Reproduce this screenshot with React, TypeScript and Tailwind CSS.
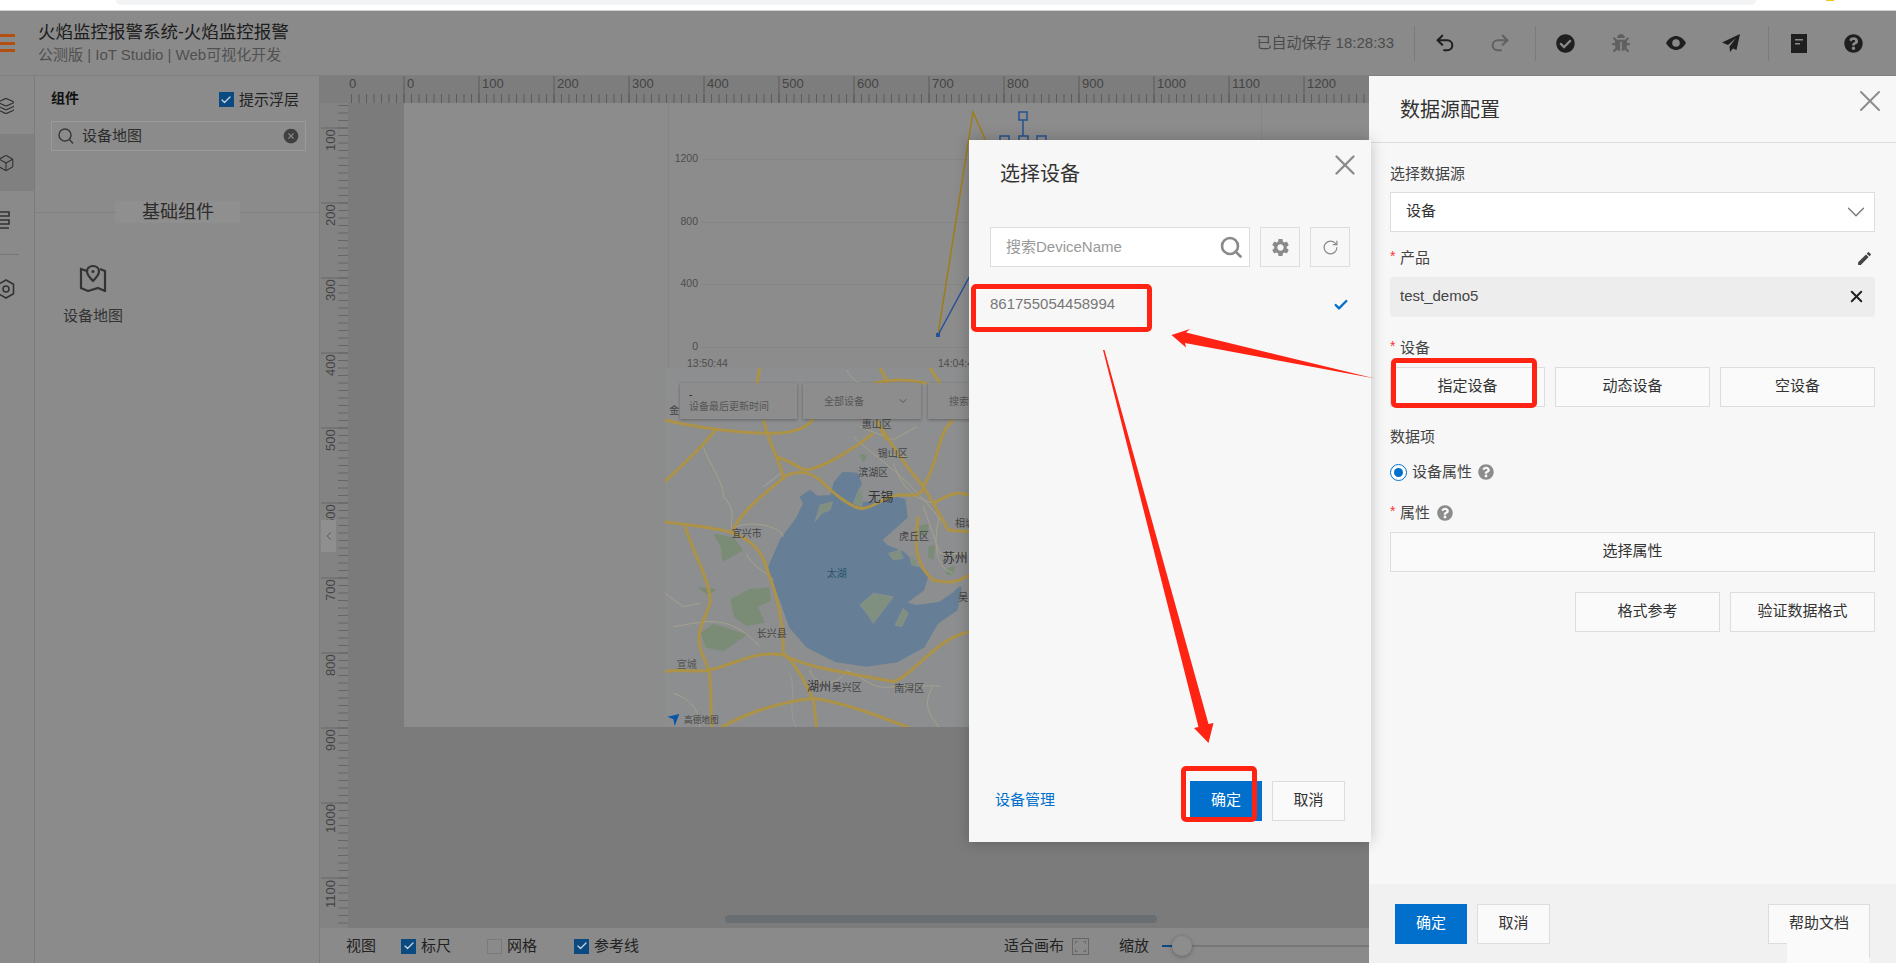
import { Box, Check, ChevronDown, ChevronLeft, Layers, Redo2, RotateCw, Undo2, X } from "lucide-react";
import { FaBug, FaCheckCircle, FaQuestionCircle } from "react-icons/fa";
import { MdEdit, MdSettings } from "react-icons/md";
import { IoCloseCircle } from "react-icons/io5";

const TOP_MAJORS = [0, 100, 200, 300, 400, 500, 600, 700, 800, 900, 1000, 1100, 1200];
const LEFT_MAJORS = [100, 200, 300, 400, 500, 600, 700, 800, 900, 1000, 1100];

function TopRuler() {
  const ticks = Array.from({ length: 136 }, (_, i) => 31 + i * 7.5);
  return (
    <svg width="1049" height="27" className="block">
      {ticks.map((x) => (
        <line key={x} x1={x + 0.5} x2={x + 0.5} y1="18" y2="27" stroke="#5c5c5c" />
      ))}
      <text x="29" y="12" fontSize="13" fill="#444">0</text>
      {TOP_MAJORS.map((n) => {
        const x = 84 + n * 0.75;
        return (
          <g key={n}>
            <line x1={x} x2={x} y1="0" y2="27" stroke="#5c5c5c" />
            <text x={x + 3} y="12" fontSize="13" fill="#444">{n}</text>
          </g>
        );
      })}
    </svg>
  );
}

function LeftRuler() {
  const ticks = Array.from({ length: 110 }, (_, i) => 2 + i * 7.5);
  return (
    <svg width="28" height="825" className="block">
      {ticks.map((y) => (
        <line key={y} x1="18" x2="28" y1={y + 0.5} y2={y + 0.5} stroke="#666" />
      ))}
      {LEFT_MAJORS.map((n, i) => {
        const y = 25 + i * 75;
        return (
          <g key={n}>
            <line x1="1" x2="28" y1={y} y2={y} stroke="#666" />
            <text transform={`translate(15 ${y + (n >= 1000 ? 30 : 23)}) rotate(-90)`} fontSize="13" fill="#444">{n}</text>
          </g>
        );
      })}
    </svg>
  );
}

function Chart() {
  return (
    <svg viewBox="404 103 965 624" width="965" height="624" className="absolute left-0 top-0">
      <line x1="668.5" x2="668.5" y1="103" y2="368" stroke="#858585" />
      <line x1="1261.5" x2="1261.5" y1="103" y2="140" stroke="#858585" />
      {[159, 222, 284, 347].map((y) => (
        <line key={y} x1="702" x2="970" y1={y + 0.5} y2={y + 0.5} stroke="#858585" />
      ))}
      <g fontSize="10.5" fill="#4d4d4d" textAnchor="end">
        <text x="698" y="162">1200</text>
        <text x="698" y="225">800</text>
        <text x="698" y="287">400</text>
        <text x="698" y="350">0</text>
      </g>
      <g fontSize="10.5" fill="#4d4d4d">
        <text x="687" y="367">13:50:44</text>
        <text x="938" y="367">14:04:44</text>
      </g>
      <polyline points="938,335 973,112 990,150" fill="none" stroke="#a07d14" strokeWidth="1.5" />
      <polyline points="938,335 972,272" fill="none" stroke="#27509a" strokeWidth="1.5" />
      <rect x="936" y="333" width="4" height="4" fill="#27509a" />
      <g fill="none" stroke="#24528f" strokeWidth="1.5">
        <rect x="1019" y="112" width="8" height="8" />
        <line x1="1023" x2="1023" y1="120" y2="136" />
        <rect x="1000" y="136" width="9" height="9" />
        <rect x="1019" y="136" width="9" height="9" />
        <rect x="1037" y="136" width="9" height="9" />
      </g>
    </svg>
  );
}

function MapPanel() {
  const mapLabels: [string, number, number, number, string][] = [
    ["金", 103, 222, 30, "#444"],
    ["惠山区", 710, 263, 30, "#444"],
    ["锡山区", 758, 350, 30, "#444"],
    ["滨湖区", 700, 408, 30, "#444"],
    ["无锡", 722, 482, 38, "#333"],
    ["宜兴市", 320, 590, 30, "#444"],
    ["虎丘区", 822, 600, 30, "#444"],
    ["相城", 975, 562, 30, "#444"],
    ["苏州", 945, 665, 38, "#333"],
    ["太湖", 590, 712, 30, "#2a5570"],
    ["吴", 970, 782, 30, "#444"],
    ["长兴县", 395, 890, 30, "#444"],
    ["湖州", 537, 1054, 36, "#333"],
    ["吴兴区", 620, 1052, 30, "#444"],
    ["南浔区", 808, 1057, 30, "#444"],
    ["宣城", 140, 985, 30, "#555"],
  ];
  return (
    <div className="absolute left-[261px] top-[265px] h-[359px] w-[340px] overflow-hidden bg-[#8d8e8f]">
      <svg viewBox="75 84 1020 1077" width="340" height="359" className="block">
        {/* green areas */}
        <g fill="#7a8c76" stroke="#7a8c76" strokeWidth="6" strokeLinejoin="round">
          <path d="M225,585 L280,595 L305,630 L250,660 L245,620 Z" />
          <path d="M275,780 L330,750 L385,745 L390,780 L350,800 L370,845 L320,855 L285,830 Z" />
          <path d="M185,880 L220,855 L315,885 L250,930 L200,920 Z" />
          <path d="M180,745 L225,750 L205,762 Z" />
          <path d="M840,560 L862,555 L858,585 L840,582 Z" />
          <path d="M868,622 L882,618 L878,655 L868,650 Z" />
          <path d="M922,688 L942,680 L938,702 L922,702 Z" />
          <path d="M662,345 L678,348 L670,362 Z" />
        </g>
        <path
          fill="#667f96"
          stroke="#667f96"
          strokeWidth="10"
          strokeLinejoin="round"
          d="M390,680 L425,600 L470,540 L495,490 L485,472 L510,455 L530,472 L575,470 L585,430 L610,400 L650,403 L660,430 L650,490 L700,490 L760,472 L792,482 L798,530 L760,565 L720,600 L740,620 L790,640 L830,680 L860,708 L848,748 L790,790 L830,800 L900,790 L940,762 L960,745 L948,808 L890,848 L850,918 L770,962 L680,975 L590,962 L502,918 L452,860 L424,780 L398,720 Z"
        />
        <g fill="#7f9080" stroke="#8f918f" strokeWidth="2">
          <path d="M660,795 L700,760 L760,770 L730,810 L700,850 L680,820 Z" />
          <path d="M765,855 L790,805 L805,820 L785,860 Z" />
          <path d="M525,545 L540,495 L578,485 L570,510 L545,520 Z" />
          <path d="M640,490 L660,440 L670,470 L665,500 Z" />
          <path d="M745,640 L780,630 L790,655 L760,660 Z" />
          <path d="M810,650 L830,660 L835,680 L815,675 Z" />
        </g>
        {/* thin roads */}
        <g fill="none" stroke="#a5a28c" strokeWidth="3">
          <path d="M190,320 C210,380 250,420 250,470 C300,520 260,560 280,570" />
          <path d="M290,560 C340,540 420,560 430,590" />
          <path d="M620,90 C640,130 690,150 700,130" />
          <path d="M640,290 C700,350 800,400 925,570" />
          <path d="M760,370 C780,420 800,470 880,490" />
          <path d="M510,990 C520,1040 600,1040 620,990 C680,1020 700,1050 760,1040 C800,1050 860,1030 900,1040" />
          <path d="M100,860 C180,850 260,810 360,920" />
          <path d="M320,640 C330,680 390,700 400,720" />
          <path d="M900,520 C880,600 880,680 940,700" />
          <path d="M660,260 L760,300 L830,260 M720,340 L800,350 M850,500 L900,640 L985,640" />
          <path d="M75,760 L130,800 L180,790 M100,1060 C160,1080 180,1120 180,1164" />
          <path d="M880,1040 C850,1080 860,1120 900,1164" />
          <path d="M450,1000 C470,1060 440,1120 470,1164" stroke="#9a9a9a" />
          <path d="M370,440 C400,420 420,400 430,395" stroke="#9a9a9a" strokeWidth="5" />
        </g>
        {/* main roads */}
        <g fill="none" stroke="#ad9347" strokeWidth="9">
          <path d="M75,240 C150,260 300,280 400,280 C470,280 510,255 520,235" />
          <path d="M372,240 C380,300 430,380 430,420" />
          <path d="M75,425 C120,380 190,320 230,265" />
          <path d="M275,580 C300,510 390,450 440,405 C480,390 510,395 540,420 C580,460 640,510 670,505 C710,500 740,460 800,465 C840,470 850,450 850,440" />
          <path d="M410,350 C470,370 480,390 500,390 C560,380 650,320 700,280" />
          <path d="M75,545 C130,555 220,560 275,578 C340,600 370,640 385,700 C410,760 430,830 430,940 C470,970 500,1040 520,1080 L530,1164" />
          <path d="M135,560 C160,640 215,730 210,790 C190,850 160,880 190,950 C220,1000 210,1080 215,1164" />
          <path d="M75,995 C120,985 160,1000 210,990 C290,970 350,930 430,945 C520,990 640,1000 760,1025 C830,1000 880,900 987,875" />
          <path d="M240,1164 C320,1120 400,1090 520,1075 C620,1090 720,1130 810,1164" />
          <path d="M850,440 C790,370 750,310 710,240 L740,300" />
          <path d="M850,440 C900,360 890,280 940,240" />
          <path d="M850,440 L880,490 L925,570 L987,575" />
          <path d="M880,490 C920,470 940,450 987,465" />
          <path d="M835,530 C820,620 830,680 880,720 C920,730 950,730 987,705" />
          <path d="M360,84 L350,130 M720,84 L745,130 M870,84 L900,130 M700,130 C760,115 820,120 860,130" />
        </g>
        <g textAnchor="middle">
          {mapLabels.map(([label, x, y, size, fill]) => (
            <text key={label} x={x} y={y} fontSize={size} fill={fill}>{label}</text>
          ))}
        </g>
        <path d="M82,1130 L118,1122 L104,1158 L100,1138 Z" fill="#0b56a6" />
        <text x="132" y="1150" fontSize="26" fill="#444">高德地图</text>
      </svg>
      <div className="absolute left-[15px] top-[15px] flex h-[36px] w-[117px] flex-col justify-center bg-[#8d8d8d] pl-[9px] text-[10px] leading-[12px] text-[#555] shadow-[0_1px_3px_rgba(0,0,0,0.3)]">
        <span className="text-[#222]">-</span>
        <span>设备最后更新时间</span>
      </div>
      <div className="absolute left-[138px] top-[15px] flex h-[36px] w-[118px] items-center justify-between bg-[#8d8d8d] pl-[21px] pr-[12px] text-[10px] text-[#555] shadow-[0_1px_3px_rgba(0,0,0,0.3)]">
        <span>全部设备</span>
        <ChevronDown size={12} />
      </div>
      <div className="absolute left-[263px] top-[15px] flex h-[36px] w-[70px] items-center bg-[#8d8d8d] pl-[21px] text-[10px] text-[#555] shadow-[0_1px_3px_rgba(0,0,0,0.3)]">
        搜索设备
      </div>
    </div>
  );
}

function DimCheck({ checked, label }: { checked: boolean; label: string }) {
  return (
    <div className="flex items-center gap-[5px]">
      {checked ? (
        <span className="flex h-[15px] w-[15px] items-center justify-center bg-[#0b4a80] text-[#c9d6e0]">
          <Check size={12} strokeWidth={2.5} />
        </span>
      ) : (
        <span className="h-[15px] w-[15px] border border-[#7a7a7a]" />
      )}
      <span className="text-[15px] leading-5 text-[#222]">{label}</span>
    </div>
  );
}

function OutlineButton({ label, className }: { label: string; className: string }) {
  return (
    <div className={`flex h-10 items-center justify-center border border-[#dddddd] bg-[#fafafa] pb-px text-[15px] text-[#333] ${className}`}>
      {label}
    </div>
  );
}

function RequiredLabel({ label }: { label: string }) {
  return (
    <span className="flex items-center">
      <span className="w-[10px] -translate-y-[2px] text-[14px] leading-5 text-[#f33]">*</span>
      {label}
    </span>
  );
}

function ConfigPanel() {
  return (
    <aside className="flex w-[527px] flex-col bg-[#f7f7f7]">
      <div className="relative flex h-[67px] shrink-0 items-center border-b border-[#dedede] pl-[31px] pt-[2px] text-[20px] text-[#333]">
        数据源配置
        <X size={36} strokeWidth={1.3} className="absolute right-[8px] top-[7px] text-[#8c8c8c]" />
      </div>
      <div className="flex-1 px-[21px] pt-[21px]">
        <div className="text-[15px] leading-5 text-[#444]">选择数据源</div>
        <div className="mt-2 flex h-10 items-center justify-between border border-[#dddddd] bg-white pb-px pl-[15px] pr-[3px] text-[15px] text-[#333]">
          设备
          <ChevronDown size={30} strokeWidth={1.1} className="text-[#777]" />
        </div>
        <div className="mt-4 flex items-center justify-between text-[15px] leading-5 text-[#444]">
          <RequiredLabel label="产品" />
          <MdEdit size={17} className="mr-[2px] text-[#444]" />
        </div>
        <div className="mt-[9px] flex h-10 items-center justify-between rounded-sm bg-[#ededed] pb-px pl-[10px] pr-[9px] text-[15px] text-[#444]">
          test_demo5
          <X size={19} strokeWidth={2.5} className="text-[#222]" />
        </div>
        <div className="mt-[21px] text-[15px] leading-5 text-[#444]">
          <RequiredLabel label="设备" />
        </div>
        <div className="mt-[9px] flex gap-[10px]">
          <OutlineButton label="指定设备" className="w-[155px]" />
          <OutlineButton label="动态设备" className="w-[155px]" />
          <OutlineButton label="空设备" className="w-[155px]" />
        </div>
        <div className="mt-5 text-[15px] leading-5 text-[#444]">数据项</div>
        <div className="mt-[15px] flex items-center text-[15px] leading-5 text-[#444]">
          <span className="mr-[5px] flex h-[17px] w-[17px] items-center justify-center rounded-full border border-[#0070cc] bg-white">
            <span className="h-[9px] w-[9px] rounded-full bg-[#0070cc]" />
          </span>
          设备属性
          <FaQuestionCircle size={16} className="ml-[6px] text-[#8c8c8c]" />
        </div>
        <div className="mt-[21px] flex items-center text-[15px] leading-5 text-[#444]">
          <RequiredLabel label="属性" />
          <FaQuestionCircle size={16} className="ml-[7px] text-[#8c8c8c]" />
        </div>
        <OutlineButton label="选择属性" className="mt-[9px] w-full" />
        <div className="mt-5 flex justify-end gap-[10px]">
          <OutlineButton label="格式参考" className="w-[145px]" />
          <OutlineButton label="验证数据格式" className="w-[145px]" />
        </div>
      </div>
      <div className="flex h-[79px] shrink-0 justify-between bg-[#f1f1f1] px-[26px] pt-5">
        <div className="flex gap-[10px]">
          <div className="flex h-10 w-[72px] items-center justify-center bg-[#0070cc] pb-px text-[15px] text-white">确定</div>
          <OutlineButton label="取消" className="w-[73px]" />
        </div>
        <OutlineButton label="帮助文档" className="w-[102px]" />
      </div>
    </aside>
  );
}

function DeviceModal() {
  return (
    <div className="absolute left-[969px] top-[140px] flex h-[702px] w-[402px] flex-col bg-[#f7f7f7] px-[21px] shadow-[0_0_14px_rgba(0,0,0,0.22)]">
      <div className="relative h-[87px] shrink-0 pl-[10px] pt-[21px] text-[20px] leading-[26px] text-[#333]">
        选择设备
        <X size={34} strokeWidth={1.7} className="absolute right-[-12px] top-[8px] text-[#8c8c8c]" />
      </div>
      <div className="flex gap-[10px]">
        <div className="flex h-10 w-[260px] items-center justify-between border border-[#dddddd] bg-white pl-[15px] pr-[7px] text-[15px] text-[#999]">
          搜索DeviceName
          <svg width="22" height="22" viewBox="0 0 22 22" fill="none" stroke="#8a8a8a" strokeWidth="2.6">
            <circle cx="10" cy="10" r="8" />
            <path d="M15.500 15.500 20.500 20.500" strokeLinecap="round" />
          </svg>
        </div>
        <div className="flex h-10 w-10 items-center justify-center border border-[#dddddd] text-[#8a8a8a]">
          <MdSettings size={21} />
        </div>
        <div className="flex h-10 w-10 items-center justify-center border border-[#dddddd] text-[#8a8a8a]">
          <RotateCw size={17} strokeWidth={1.7} />
        </div>
      </div>
      <div className="mt-[27px] flex flex-1 items-start justify-between pr-[1px] text-[15px] leading-5 text-[#777]">
        861755054458994
        <Check size={16} strokeWidth={3.5} className="mt-[3px] text-[#0070cc]" />
      </div>
      <div className="flex h-[61px] shrink-0 items-start justify-between pl-[5px]">
        <span className="mt-[9px] text-[15px] leading-5 text-[#0070cc]">设备管理</span>
        <div className="mr-[5px] flex gap-[10px]">
          <div className="flex h-10 w-[72px] items-center justify-center bg-[#0070cc] pb-px text-[15px] text-white">确定</div>
          <OutlineButton label="取消" className="w-[73px]" />
        </div>
      </div>
    </div>
  );
}

export default function App() {
  return (
    <div className="relative flex h-[963px] w-[1896px] flex-col overflow-hidden bg-white font-['Liberation_Sans','Noto_Sans_CJK_SC',sans-serif]">
      {/* browser strip */}
      <div className="relative h-[11px] shrink-0 border-b border-[#cfcfcf] bg-white">
        <div className="ml-[116px] h-[5px] w-[1640px] rounded-b-lg bg-[#f1f3f4]" />
        <div className="absolute left-[1826px] top-0 h-[1px] w-[8px] bg-[#f5c518]" />
      </div>

      {/* header */}
      <header className="flex h-[65px] shrink-0 items-center justify-between border-b border-[#808080] bg-[#8a8a8a]">
        <div className="flex items-center">
          <div className="flex h-[18px] w-[15px] flex-col justify-between">
            <span className="h-[3px] bg-[#b4500f]" />
            <span className="h-[3px] bg-[#b4500f]" />
            <span className="h-[3px] bg-[#b4500f]" />
          </div>
          <div className="ml-[23px]">
            <div className="-mt-[2px] text-[17.5px] leading-[26px] text-[#1c1c1c]">火焰监控报警系统-火焰监控报警</div>
            <div className="text-[15px] leading-5 text-[#505050]">公测版 | IoT Studio | Web可视化开发</div>
          </div>
        </div>
        <div className="flex items-center">
          <span className="mr-[20px] text-[15px] text-[#4a4a4a]">已自动保存 18:28:33</span>
          <div className="flex h-[35px] items-center border-l border-[#7a7a7a] pl-[2px] pr-[8px]">
            <div className="flex w-[55px] justify-center text-[#1f1f1f]"><Undo2 size={22} strokeWidth={2.2} /></div>
            <div className="flex w-[55px] justify-center text-[#606060]"><Redo2 size={22} strokeWidth={2.2} /></div>
          </div>
          <div className="flex h-[35px] items-center border-l border-[#7a7a7a] pl-[2px] pr-[10px]">
            <div className="flex w-[55px] justify-center text-[#1f1f1f]"><FaCheckCircle size={19} /></div>
            <div className="flex w-[55px] justify-center text-[#606060]"><FaBug size={18} /></div>
            <div className="flex w-[55px] justify-center">
              <svg width="20" height="16" viewBox="0 0 20 16">
                <path fill="#1f1f1f" d="M0 8C3 3 6.500 1 10 1s7 2 10 7c-3 5-6.500 7-10 7S3 13 0 8z" />
                <circle cx="10" cy="8" r="3.800" fill="#8a8a8a" />
              </svg>
            </div>
            <div className="flex w-[55px] justify-center">
              <svg width="18" height="18" viewBox="0 0 18 18">
                <path fill="#1f1f1f" d="M18 0 0 8.500l6 2.500 8-7-6.500 8.500.5 5.500 3-3.500 3.500 1.500z" />
              </svg>
            </div>
          </div>
          <div className="flex h-[35px] items-center border-l border-[#7a7a7a] pl-[2px] pr-[15px]">
            <div className="flex w-[55px] justify-center">
              <svg width="16" height="19" viewBox="0 0 16 19">
                <path fill="#1f1f1f" d="M0 0h16v19H0z" />
                <path fill="#8a8a8a" d="M4 5h8v1.600H4zM4 9h5v1.600H4z" />
              </svg>
            </div>
            <div className="flex w-[55px] justify-center text-[#1f1f1f]"><FaQuestionCircle size={19} /></div>
          </div>
        </div>
      </header>

      <div className="flex min-h-0 flex-1">
        {/* icon rail */}
        <nav className="flex w-[35px] shrink-0 flex-col border-r border-[#7b7b7b] bg-[#8a8a8a] pt-px text-[#333]">
          <div className="flex h-[57px] items-center"><Layers size={18} strokeWidth={1.5} className="-ml-[3px]" /></div>
          <div className="flex h-[57px] items-center bg-[#808080]"><Box size={18} strokeWidth={1.5} className="-ml-[3px]" /></div>
          <div className="flex h-[57px] items-center">
            <svg width="18" height="20" viewBox="0 0 18 20" fill="none" stroke="currentColor" strokeWidth="1.6" className="-ml-[4px]">
              <path d="M1 2h12v4H1zM1 6v4h12v4H1v4h12" />
            </svg>
          </div>
          <div className="mt-[6px] h-px w-[19px] bg-[#777]" />
          <div className="mt-[5px] flex h-[57px] items-center">
            <svg width="18" height="20" viewBox="0 0 18 20" fill="none" stroke="currentColor" strokeWidth="1.6" className="-ml-[3px]">
              <path d="M9 1l7.500 4.300v9.400L9 19l-7.500-4.300V5.300z" />
              <circle cx="9" cy="10" r="3" />
            </svg>
          </div>
        </nav>

        {/* component panel */}
        <section className="flex w-[285px] shrink-0 flex-col border-r border-[#7b7b7b] bg-[#8b8b8b] px-[16px]">
          <div className="mt-[12px] flex h-5 items-center justify-between pr-[4px]">
            <span className="text-[14px] font-bold text-[#111]">组件</span>
            <div className="mt-[3px]"><DimCheck checked label="提示浮层" /></div>
          </div>
          <div className="mt-[13px] flex h-[30px] w-[255px] items-center border border-[#9a9a9a] px-[5px] text-[15px] text-[#2c2c2c]">
            <svg width="18" height="18" viewBox="0 0 18 18" fill="none" stroke="#3a3a3a" strokeWidth="1.5">
              <circle cx="8" cy="8" r="6" />
              <path d="M12.500 12.500 16 16.500" />
            </svg>
            <span className="ml-[7px] flex-1">设备地图</span>
            <IoCloseCircle size={18} className="text-[#3f3f3f]" />
          </div>
          <div className="relative -mx-[16px] mt-[50px] flex h-[22px] justify-center">
            <div className="absolute left-0 right-0 top-[11px] h-px bg-[#7f7f7f]" />
            <div className="relative flex w-[125px] items-center justify-center bg-[#8f8f8f] pl-[2px] text-[18px] text-[#2c2c2c]">基础组件</div>
          </div>
          <div className="mt-[41px] flex w-[84px] flex-col items-center text-[#333]">
            <svg width="28" height="28" viewBox="0 0 28 28" fill="none" stroke="currentColor" strokeWidth="2.2">
              <path d="M8 7 2 5v19l7 3 10-3 7 3V7l-5-2" />
              <path d="M14 2c-3.500 0-6 2.500-6 5.600C8 11 14 17 14 17s6-6 6-9.400C20 4.500 17.500 2 14 2z" />
              <circle cx="14" cy="7.500" r="1.500" fill="currentColor" stroke="none" />
            </svg>
            <span className="mt-[14px] text-[15px] leading-5 text-[#333]">设备地图</span>
          </div>
        </section>

        {/* canvas */}
        <main className="flex min-w-0 flex-1 flex-col">
          <div className="h-[27px] shrink-0 overflow-hidden bg-[#7d7d7d]">
            <TopRuler />
          </div>
          <div className="flex min-h-0 flex-1">
            <div className="relative w-[28px] shrink-0 overflow-hidden bg-[#838383]">
              <LeftRuler />
              <div className="absolute left-[1px] top-[417px] flex h-[32px] w-[15px] items-center justify-center bg-[#8f8f8f] text-[#444]">
                <ChevronLeft size={14} strokeWidth={1.2} />
              </div>
            </div>
            <div className="relative min-w-0 flex-1 overflow-hidden bg-[#7b7b7b] pl-[56px]">
              <div className="relative h-[624px] overflow-hidden bg-[#8c8c8c]">
                <Chart />
                <MapPanel />
              </div>
              <div className="absolute bottom-[5px] left-[377px] h-[8px] w-[432px] rounded bg-[#696e73]" />
            </div>
          </div>
          <div className="flex h-[35px] shrink-0 items-center bg-[#8a8a8a] pl-[26px] pt-px">
            <span className="text-[15px] text-[#222]">视图</span>
            <div className="ml-[25px] w-[86px]"><DimCheck checked label="标尺" /></div>
            <div className="w-[87px]"><DimCheck checked={false} label="网格" /></div>
            <DimCheck checked label="参考线" />
            <span className="ml-[365px] text-[15px] text-[#222]">适合画布</span>
            <span className="ml-[8px] flex h-[17px] w-[17px] items-center justify-center border border-[#666]">
              <svg width="11" height="11" viewBox="0 0 11 11" fill="none" stroke="#555">
                <path d="M0 3V0h3M8 0h3v3M11 8v3H8M3 11H0V8" />
              </svg>
            </span>
            <span className="ml-[30px] text-[15px] text-[#222]">缩放</span>
            <div className="relative ml-[13px] h-[2px] flex-1 bg-[#777]">
              <div className="h-[2px] w-[10px] bg-[#0b4a80]" />
              <div className="absolute left-[10px] top-[-9px] h-5 w-5 rounded-full bg-[#8d8d8d] shadow-[0_1px_4px_rgba(0,0,0,0.3)]" />
            </div>
          </div>
        </main>

        <ConfigPanel />
      </div>

      <DeviceModal />

      {/* torn edge left by the screenshot under 帮助文档 */}
      <div className="absolute left-[1787px] top-[943px] h-[15px] w-[83px] border-r border-[#dddddd] bg-[#fafafa]" />
      <div className="absolute left-[1787px] top-[958px] h-[5px] w-[83px] bg-[#fafafa]" />

      {/* red annotations */}
      <div className="absolute left-[971px] top-[284px] h-[48px] w-[181px] rounded-[5px] border-[5px] border-[#ff2314]" />
      <div className="absolute left-[1391px] top-[358px] h-[50px] w-[146px] rounded-[5px] border-[5px] border-[#ff2314]" />
      <div className="absolute left-[1181px] top-[766px] h-[56px] w-[76px] rounded-[5px] border-[5px] border-[#ff2314]" />
      <svg width="1896" height="963" className="pointer-events-none absolute left-0 top-0">
        <polygon fill="#ff2314" points="1375,378.500 1185,343 1186,347.500 1171.500,335 1190,329 1186,332.500" />
        <polygon fill="#ff2314" points="1103,350 1104.500,350 1208.500,724 1213.500,723 1208.500,743 1194,728 1198.500,727" />
      </svg>
    </div>
  );
}
